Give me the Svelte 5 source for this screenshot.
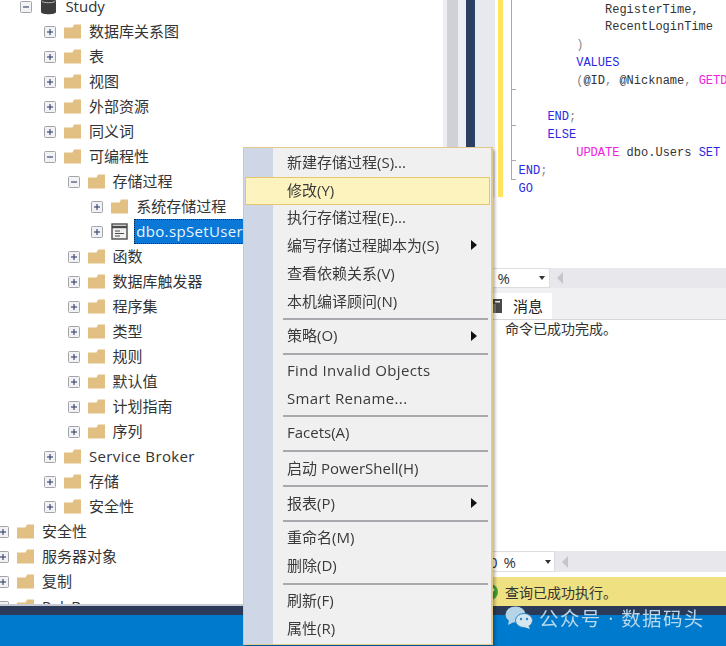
<script>
  const rows = [
    { level: 1, state: 'minus', icon: 'db', label: 'Study' },
    { level: 2, state: 'plus', label: '数据库关系图' },
    { level: 2, state: 'plus', label: '表' },
    { level: 2, state: 'plus', label: '视图' },
    { level: 2, state: 'plus', label: '外部资源' },
    { level: 2, state: 'plus', label: '同义词' },
    { level: 2, state: 'minus', label: '可编程性' },
    { level: 3, state: 'minus', label: '存储过程' },
    { level: 4, state: 'plus', label: '系统存储过程' },
    { level: 4, state: 'plus', icon: 'proc', label: 'dbo.spSetUserInfo', selected: true, wide: true },
    { level: 3, state: 'plus', label: '函数' },
    { level: 3, state: 'plus', label: '数据库触发器' },
    { level: 3, state: 'plus', label: '程序集' },
    { level: 3, state: 'plus', label: '类型' },
    { level: 3, state: 'plus', label: '规则' },
    { level: 3, state: 'plus', label: '默认值' },
    { level: 3, state: 'plus', label: '计划指南' },
    { level: 3, state: 'plus', label: '序列' },
    { level: 2, state: 'plus', label: 'Service Broker', wide: true },
    { level: 2, state: 'plus', label: '存储' },
    { level: 2, state: 'plus', label: '安全性' },
    { level: 1, state: 'plus', label: '安全性', outer: true },
    { level: 1, state: 'plus', label: '服务器对象', outer: true },
    { level: 1, state: 'plus', label: '复制', outer: true },
    { level: 1, state: 'plus', label: 'PolyBase', outer: true }
  ];

  // each row indents by 23.6px, outer nodes sit one level further left
  const indent = (r) => (r.outer ? -3 : 23.6 * (r.level - 1) + 20.4);

  const menu = [
    { label: '新建存储过程(S)...' },
    { label: '修改(Y)', active: true },
    { label: '执行存储过程(E)...' },
    { label: '编写存储过程脚本为(S)', sub: true },
    { label: '查看依赖关系(V)' },
    { label: '本机编译顾问(N)' },
    { sep: true },
    { label: '策略(O)', sub: true },
    { sep: true },
    { label: 'Find Invalid Objects', wide: true },
    { label: 'Smart Rename...', wide: true },
    { sep: true },
    { label: 'Facets(A)' },
    { sep: true },
    { label: '启动 PowerShell(H)' },
    { sep: true },
    { label: '报表(P)', sub: true },
    { sep: true },
    { label: '重命名(M)' },
    { label: '删除(D)' },
    { sep: true },
    { label: '刷新(F)' },
    { label: '属性(R)' }
  ];
</script>

<div class="app">
  <div class="main">
    <div class="tree">
      {#each rows as r}
        <div class="row" style:margin-left="{indent(r)}px">
          <svg class="box" width="12" height="12" viewBox="0 0 12 12">
            <rect x="0.5" y="0.5" width="11" height="11" rx="1" fill="#f2f2f4" stroke="#a2a4aa" />
            <path d="M3 6h6" stroke="#3f4a74" stroke-width="1.2" />
            {#if r.state === 'plus'}<path d="M6 3v6" stroke="#3f4a74" stroke-width="1.2" />{/if}
          </svg>
          {#if r.icon === 'db'}
            <svg class="icon" width="17" height="17" viewBox="0 0 17 17">
              <path d="M1 3c0-3 15-3 15 0v11c0 3-15 3-15 0z" fill="#3d3d3d" />
              <path d="M2 3.5c2 1.6 11 1.6 13 0" fill="none" stroke="#b9b9b9" stroke-width="1" />
            </svg>
          {:else if r.icon === 'proc'}
            <svg class="icon" width="17" height="17" viewBox="0 0 17 17">
              <rect x="1" y="1" width="15" height="15" fill="#f1f1f1" stroke="#4b4b4b" stroke-width="1.4" />
              <path d="M1 4h15" stroke="#4b4b4b" stroke-width="2.4" />
              <path d="M4 8h5M4 10.5h9M4 13h5" stroke="#4b4b4b" stroke-width="1" />
            </svg>
          {:else}
            <svg class="icon" width="17" height="17" viewBox="0 0 17 17">
              <path d="M0 4.5h8.5L10 1.5h7v14H0z" fill="#e2c084" />
            </svg>
          {/if}
          <span class="label" class:selected={r.selected} class:wide={r.wide}>{r.label}</span>
        </div>
      {/each}
    </div>

    <div class="splitter">
      <div class="s1"></div>
      <div class="s2"></div>
      <div class="s3"></div>
      <div class="s4"></div>
    </div>

    <div class="right">
      <div class="editor">
        <div class="margin"></div>
        <div class="changebar"></div>
        <div class="fold">
          <i style:top="89px"></i>
          <i style:top="125px"></i>
          <i style:top="160px"></i>
          <i style:top="179px"></i>
        </div>
        <pre class="code">
            RegisterTime,
            RecentLoginTime
        <span class="gr">)</span>
        <span class="kw">VALUES</span>
        <span class="gr">(</span>@ID<span class="gr">,</span> @Nickname<span class="gr">,</span> <span class="fn">GETDATE</span>

    <span class="kw">END</span><span class="gr">;</span>
    <span class="kw">ELSE</span>
        <span class="fn">UPDATE</span> dbo.Users <span class="kw">SET</span> Nickname
<span class="kw">END</span><span class="gr">;</span>
<span class="kw">GO</span></pre>
      </div>

      <div class="zoombar">
        <div class="combo"><span>100 %</span><b></b></div>
        <em></em>
      </div>

      <div class="tabs">
        <div class="tab">
          <svg width="14" height="16" viewBox="0 0 14 16">
            <path d="M3 1h9v14H3z" fill="#4a4a4a" />
            <path d="M5 3h5v1.5H5z" fill="#eee" />
            <path d="M1 6h5v9H1z" fill="#777" />
          </svg>
          <span>消息</span>
        </div>
      </div>

      <div class="results">命令已成功完成。</div>

      <div class="zoombar low">
        <div class="combo"><span>100 %</span><b></b></div>
        <em></em>
      </div>

      <div class="status">
        <svg width="16" height="16" viewBox="0 0 16 16">
          <circle cx="8" cy="8" r="8" fill="#3fa535" />
          <path d="M4 8l3 3 5-6" fill="none" stroke="#fff" stroke-width="2" />
        </svg>
        <span>查询已成功执行。</span>
      </div>
    </div>
  </div>

  <div class="footer"></div>

  <div class="menu">
    {#each menu as m}
      {#if m.sep}
        <div class="sep"></div>
      {:else}
        <div class="item" class:active={m.active} class:wide={m.wide}>
          <span>{m.label}</span>
          {#if m.sub}<i class="arrow"></i>{/if}
        </div>
      {/if}
    {/each}
  </div>

  <div class="watermark">
    <svg width="28" height="24" viewBox="0 0 28 24">
      <ellipse cx="10.5" cy="8.5" rx="10" ry="8" fill="#b5d4e8" />
      <path d="M4 14l-1 5 6-3z" fill="#b5d4e8" />
      <ellipse cx="19" cy="14.5" rx="8.5" ry="7" fill="#d5e6f0" stroke="#2c86c6" stroke-width="1" />
      <path d="M23 19l2 4-6-2z" fill="#d5e6f0" />
      <circle cx="16" cy="13" r="1.2" fill="#2c86c6" />
      <circle cx="22" cy="13" r="1.2" fill="#2c86c6" />
    </svg>
    <span>公众号 · 数据码头</span>
  </div>
</div>

<style>
  :global(body) {
    margin: 0;
    background: #fff;
  }

  .app {
    position: relative;
    width: 726px;
    height: 646px;
    overflow: hidden;
    font-family: "Open Sans", "Noto Sans CJK SC", sans-serif;
    font-size: 15px;
    color: #333;
    filter: blur(0.5px);
  }

  .main {
    display: flex;
    height: 606px;
  }

  .tree {
    width: 443px;
    height: 606px;
    flex-shrink: 0;
    overflow: hidden;
    background: #fff;
    border-bottom: 2px solid #c6cad2;
    box-sizing: border-box;
  }

  .row {
    display: flex;
    align-items: center;
    height: 25px;
    white-space: nowrap;
  }

  .row:first-child {
    margin-top: -6px;
  }

  .box {
    flex-shrink: 0;
    margin-right: 8px;
  }

  .icon {
    flex-shrink: 0;
    margin-right: 8px;
  }

  .label {
    line-height: 25px;
    padding: 0 2px 0 0;
  }

  .wide {
    letter-spacing: 0.35px;
  }

  .label.selected {
    background: #0a78d7;
    color: #e8f4ff;
    outline: 1px dotted #123;
    outline-offset: -1px;
    margin-left: -2px;
    padding: 0 4px 0 2px;
  }

  .splitter {
    display: flex;
    width: 32px;
    flex-shrink: 0;
  }

  .s1 {
    width: 4px;
    background: #eeeef2;
  }

  .s2 {
    width: 11px;
    background: #cfd1d6;
  }

  .s3 {
    width: 8px;
    background: #eeeef2;
  }

  .s4 {
    width: 9px;
    background: #2d3f60;
  }

  .right {
    flex: 1;
    min-width: 0;
    display: flex;
    flex-direction: column;
    background: #f0f0f3;
  }

  .editor {
    position: relative;
    height: 268px;
    background: #fff;
    overflow: hidden;
    flex-shrink: 0;
  }

  .margin {
    position: absolute;
    left: 0;
    top: 0;
    width: 20px;
    height: 197px;
    background: #e8e9ee;
  }

  .changebar {
    position: absolute;
    left: 23px;
    top: 0;
    width: 5px;
    height: 197px;
    background: #ffe45c;
  }

  .fold {
    position: absolute;
    left: 36px;
    top: 0;
    width: 1px;
    height: 180px;
    background: #a9a9a9;
  }

  .fold i {
    position: absolute;
    left: 0;
    width: 5px;
    height: 1px;
    background: #a9a9a9;
  }

  .code {
    position: absolute;
    left: 43.6px;
    top: 1.5px;
    margin: 0;
    font-family: "Liberation Mono", monospace;
    font-size: 12px;
    line-height: 17.9px;
    color: #333;
    white-space: pre;
  }

  .kw {
    color: #2a2ae0;
  }

  .fn {
    color: #f020e0;
  }

  .gr {
    color: #888;
  }

  .zoombar {
    display: flex;
    align-items: center;
    height: 20px;
    background: #e8e8ec;
    flex-shrink: 0;
  }

  .zoombar.low {
    height: 21px;
  }

  .combo {
    display: flex;
    align-items: center;
    justify-content: flex-end;
    gap: 29px;
    width: 75px;
    height: 100%;
    box-sizing: border-box;
    padding-right: 4px;
    background: #fff;
    border: 1px solid #dcdce2;
    font-size: 15px;
    word-spacing: 2px;
    white-space: nowrap;
    overflow: hidden;
  }

  .low .combo {
    width: 80px;
    padding-right: 3px;
  }

  .combo b {
    width: 0;
    height: 0;
    border: 3.5px solid transparent;
    border-top: 4px solid #333;
    border-bottom: 0;
  }

  .zoombar em {
    width: 0;
    height: 0;
    margin-left: 7px;
    border: 6px solid transparent;
    border-right: 6px solid #c4c6cc;
    border-left: 0;
  }

  .tabs {
    height: 32px;
    display: flex;
    align-items: flex-end;
    flex-shrink: 0;
    border-bottom: 1px solid #d6d6da;
    box-sizing: border-box;
  }

  .tab {
    display: flex;
    align-items: center;
    gap: 9px;
    height: 26px;
    width: 77px;
    padding: 0 0 1px 15px;
    box-sizing: border-box;
    background: #fff;
    color: #222;
    font-size: 15px;
  }

  .results {
    flex: 1;
    background: #fff;
    padding: 2px 0 0 30px;
    font-size: 14px;
    line-height: 14px;
  }

  .status {
    display: flex;
    align-items: center;
    gap: 7px;
    height: 34px;
    border-top: 5px solid #fff;
    box-sizing: border-box;
    padding-left: 7px;
    background: #efe081;
    font-size: 14px;
    color: #333;
    flex-shrink: 0;
  }

  .footer {
    height: 40px;
    box-sizing: border-box;
    border-top: 9px solid #2b3a58;
    background: #007acc;
  }

  .menu {
    position: absolute;
    left: 243px;
    top: 147px;
    width: 249px;
    box-sizing: border-box;
    padding: 1px;
    border: 1px solid #e2c98b;
    background: linear-gradient(to right, #cfd6e6 29px, #f0f0f0 29px);
    box-shadow: 1px 0 0 #e2c98b, 3px 3px 3px rgba(0, 0, 0, 0.3);
  }

  .item {
    display: flex;
    align-items: center;
    height: 27.75px;
    box-sizing: border-box;
    padding: 0 0 3px 42px;
    color: #3a3a3a;
    white-space: nowrap;
    position: relative;
  }

  .item.active {
    background: #fdf3bf;
    outline: 1px solid #e5c66e;
    outline-offset: -1px;
  }

  .arrow {
    position: absolute;
    right: 13px;
    top: 8px;
    width: 0;
    height: 0;
    border: 5px solid transparent;
    border-left: 6px solid #111;
    border-right: 0;
  }

  .sep {
    height: 7.1px;
    display: flex;
    align-items: center;
    margin: 0 2px 0 38px;
  }

  .sep::after {
    content: "";
    flex: 1;
    height: 2px;
    background: #a8a9ad;
  }

  .watermark {
    position: absolute;
    left: 505px;
    top: 603px;
    display: flex;
    align-items: center;
    gap: 6px;
    color: #b7d7ec;
    font-size: 19.5px;
    letter-spacing: 1.4px;
    white-space: nowrap;
  }
</style>
